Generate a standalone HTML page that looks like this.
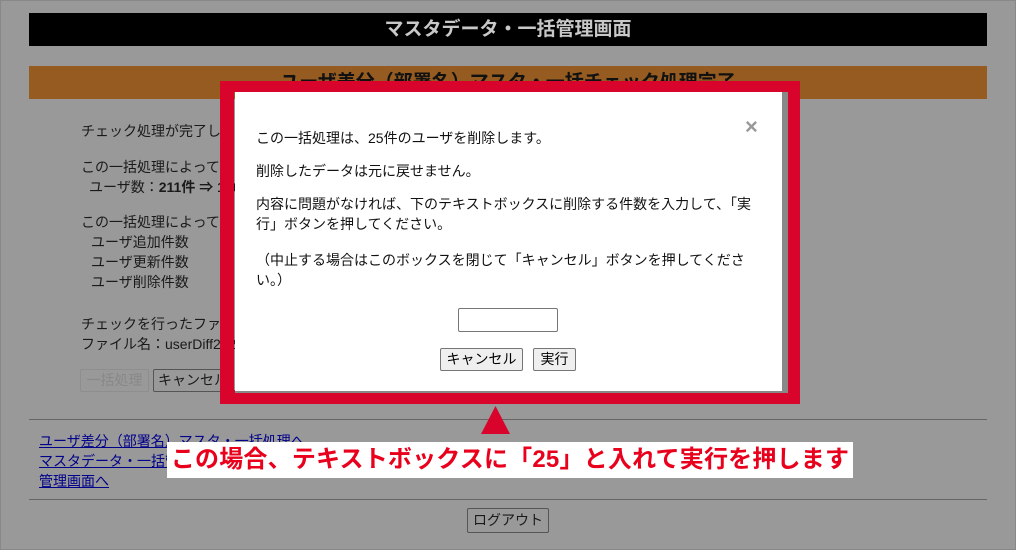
<!DOCTYPE html>
<html><head><meta charset="utf-8"><style>
*{margin:0;padding:0;box-sizing:border-box}
body{width:1016px;height:550px;background:#999;position:relative;overflow:hidden;font-family:"Liberation Sans","Noto Sans CJK JP",sans-serif;font-size:14px;color:#1a1a1a}
.a{position:absolute;white-space:nowrap}
.btn{position:absolute;border:1px solid #555;border-radius:2px;background:#999;font-size:14px;text-align:center;line-height:21px}
.dbtn{position:absolute;border:1px solid #767676;border-radius:2px;background:#efefef;font-size:14px;text-align:center;line-height:20px;color:#000}
a{color:#00008a}
</style></head><body>
<div class="a" style="left:0;top:0;width:1016px;height:550px;border:1px solid #888"></div>
<div class="a" style="left:29px;top:13px;width:958px;height:33px;background:#000;color:#c8c8c8;font-weight:bold;font-size:19px;text-align:center;line-height:33px">マスタデータ・一括管理画面</div>
<div class="a" style="left:29px;top:66px;width:958px;height:33px;background:#955b20;color:#111;font-weight:bold;font-size:19px;text-align:center;line-height:33px;overflow:hidden">ユーザ差分（部署名）マスタ・一括チェック処理完了</div>
<div class="a" style="left:81px;top:121px">チェック処理が完了しました。</div>
<div class="a" style="left:81px;top:157px">この一括処理によって</div>
<div class="a" style="left:89px;top:177px">ユーザ数：<b>211件 ⇒ 186件</b></div>
<div class="a" style="left:81px;top:212px">この一括処理によって</div>
<div class="a" style="left:91px;top:232px">ユーザ追加件数</div>
<div class="a" style="left:91px;top:252px">ユーザ更新件数</div>
<div class="a" style="left:91px;top:272px">ユーザ削除件数</div>
<div class="a" style="left:81px;top:314px">チェックを行ったファイル</div>
<div class="a" style="left:81px;top:334px">ファイル名：userDiff2022</div>
<div class="btn" style="left:80px;top:369px;width:69px;height:23px;border-color:#8e8e8e;color:#888">一括処理</div>
<div class="btn" style="left:153px;top:369px;width:80px;height:23px">キャンセル</div>
<div class="a" style="left:29px;top:419px;width:958px;height:1px;background:#666"></div>
<div class="a" style="left:39px;top:431px"><a href="#">ユーザ差分（部署名）マスタ・一括処理へ</a></div>
<div class="a" style="left:39px;top:451px"><a href="#">マスタデータ・一括管理画面へ</a></div>
<div class="a" style="left:39px;top:471px"><a href="#">管理画面へ</a></div>
<div class="a" style="left:29px;top:499px;width:958px;height:1px;background:#666"></div>
<div class="btn" style="left:467px;top:508px;width:82px;height:25px;line-height:23px">ログアウト</div>

<div class="a" style="left:220px;top:81px;width:580px;height:323px;border:14px solid #d9042c;border-top-width:11px"></div>
<div class="a" style="left:235px;top:92px;width:553px;height:301px;background:#888"></div>
<div class="a" style="left:235px;top:92px;width:547px;height:299px;background:#fff;color:#111">
<div class="a" style="left:21px;top:36px">この一括処理は、25件のユーザを削除します。</div>
<div class="a" style="left:21px;top:69px">削除したデータは元に戻せません。</div>
<div class="a" style="left:21px;top:102px;line-height:20px">内容に問題がなければ、下のテキストボックスに削除する件数を入力して、「実<br>行」ボタンを押してください。</div>
<div class="a" style="left:21px;top:158px;line-height:20px">（中止する場合はこのボックスを閉じて「キャンセル」ボタンを押してくださ<br>い。）</div>
<div class="a" style="left:510px;top:22px;color:#999;font-size:22px;font-weight:bold">×</div>
<div class="a" style="left:223px;top:216px;width:100px;height:24px;border:1px solid #767676;border-radius:2px"></div>
<div class="dbtn" style="left:205px;top:256px;width:83px;height:23px">キャンセル</div>
<div class="dbtn" style="left:298px;top:256px;width:43px;height:23px">実行</div>
</div>
<svg class="a" style="left:480px;top:405px" width="31" height="30"><polygon points="15.5,1 30,29 1,29" fill="#d9042c"/></svg>
<div class="a" style="left:167px;top:442px;width:686px;height:36px;background:#fff;color:#e8001c;font-weight:bold;font-size:24px;line-height:36px;text-align:center;letter-spacing:0.2px">この場合、テキストボックスに「25」と入れて実行を押します</div>
</body></html>
